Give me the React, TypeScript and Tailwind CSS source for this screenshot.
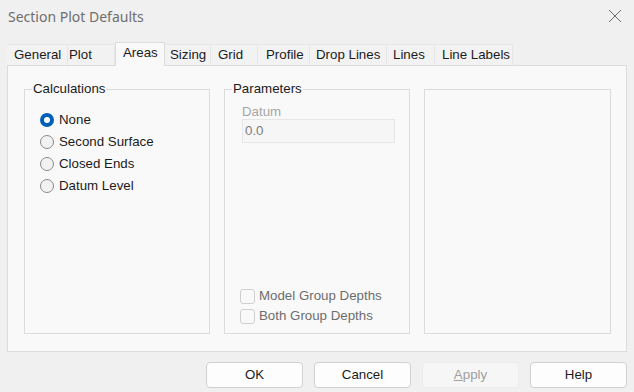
const tabs = [
  { label: "General", w: "w-[61px]", pl: "pl-[7px]" },
  { label: "Plot", w: "w-[47px]", pl: "pl-[1px]" },
  { label: "Areas", w: "w-[50px]", pl: "pl-[7px]", active: true },
  { label: "Sizing", w: "w-[46px]", pl: "pl-[5px]" },
  { label: "Grid", w: "w-[47px]", pl: "pl-[7px]" },
  { label: "Profile", w: "w-[52px]", pl: "pl-[8px]" },
  { label: "Drop Lines", w: "w-[77px]", pl: "pl-[6px]" },
  { label: "Lines", w: "w-[48px]", pl: "pl-[6px]" },
  { label: "Line Labels", w: "w-[78px]", pl: "pl-[7px]" },
];

const calcOptions = ["None", "Second Surface", "Closed Ends", "Datum Level"];

function Radio({ checked }: { checked?: boolean }) {
  if (checked) {
    return (
      <span className="flex h-[14px] w-[14px] items-center justify-center rounded-full bg-[#005fb8]">
        <span className="h-[6px] w-[6px] rounded-full bg-white" />
      </span>
    );
  }
  return <span className="h-[14px] w-[14px] rounded-full border border-[#8a8a8a] bg-[#f2f2f2]" />;
}

function Checkbox({ label }: { label: string }) {
  return (
    <div className="flex h-[20px] items-center gap-[4px]">
      <span className="h-[15px] w-[15px] rounded-[3px] border border-[#cfcfcf] bg-[#f9f9f9]" />
      <span className="text-[#6d6d6d]">{label}</span>
    </div>
  );
}

function Group({ title, children }: { title: string; children?: React.ReactNode }) {
  return (
    <fieldset className="h-[253px] border border-[#dcdcdc]">
      <legend className="ml-[7px] px-[1px] leading-[16px] text-[#1b1b1b]">{title}</legend>
      <div className="flex h-[236px] flex-col">{children}</div>
    </fieldset>
  );
}

function Button({ label, disabled }: { label: React.ReactNode; disabled?: boolean }) {
  return (
    <button
      className={
        disabled
          ? "h-[26px] w-[97px] rounded-[4px] border border-[#ececec] bg-[#f6f6f6] text-[#a0a0a0]"
          : "h-[26px] w-[97px] rounded-[4px] border border-[#d0d0d0] bg-[#fdfdfd] text-[#1b1b1b]"
      }
    >
      {label}
    </button>
  );
}

export default function App() {
  return (
    <div className="flex h-[392px] w-[634px] flex-col bg-[#f0f0f0] text-[13.3px] font-['Liberation_Sans',Arial,sans-serif] text-[#1b1b1b]">
      <div className="flex h-[33px] items-center justify-between pl-[8px] pr-[12px]">
        <span className="font-['Noto_Sans',sans-serif] text-[14px] text-[#6e6e6e]">Section Plot Defaults</span>
        <svg width="14" height="14" viewBox="0 0 14 14" className="mt-[-2px]">
          <path d="M1 1L13 13M13 1L1 13" stroke="#6a6a6a" strokeWidth="1" />
        </svg>
      </div>

      <div className="mt-[9px] flex h-[23px] items-end pl-[7px]">
        {tabs.map((t) =>
          t.active ? (
            <div
              key={t.label}
              className={`relative z-10 -mb-[1px] flex h-[24px] items-center border-x border-t border-[#dcdcdc] bg-[#f9f9f9] pb-[3px] ${t.w} ${t.pl}`}
            >
              {t.label}
            </div>
          ) : (
            <div
              key={t.label}
              className={`flex h-[21px] items-center border-r border-t border-[#e6e6e6] bg-[#f2f2f2] ${t.w} ${t.pl}`}
            >
              {t.label}
            </div>
          )
        )}
      </div>

      <div className="mx-[7px] grid h-[287px] grid-cols-[186px_186px_187px] gap-[14px] border border-[#dcdcdc] bg-[#f9f9f9] px-[16px] pt-[15px]">
        <Group title="Calculations">
          <div className="flex flex-col pl-[15px] pt-[12px]">
            {calcOptions.map((o, i) => (
              <div key={o} className="flex h-[22px] items-center gap-[5px]">
                <Radio checked={i === 0} />
                <span>{o}</span>
              </div>
            ))}
          </div>
        </Group>
        <Group title="Parameters">
          <div className="flex h-full flex-col pl-[17px] pr-[14px] pt-[7px]">
            <span className="h-[15px] leading-[15px] text-[#a6a6a6]">Datum</span>
            <div className="flex h-[24px] items-center border border-[#e6e6e6] bg-[#f6f6f6] pl-[2px] text-[#7d7d7d]">0.0</div>
            <div className="mt-auto flex flex-col pb-[7px] -ml-[2px]">
              <Checkbox label="Model Group Depths" />
              <Checkbox label="Both Group Depths" />
            </div>
          </div>
        </Group>
        <fieldset className="mt-[8px] h-[245px] border border-[#dcdcdc]" />
      </div>

      <div className="mt-[10px] flex justify-end gap-[11px] pr-[7px]">
        <Button label="OK" />
        <Button label="Cancel" />
        <Button
          disabled
          label={
            <>
              <span className="underline">A</span>pply
            </>
          }
        />
        <Button label="Help" />
      </div>
    </div>
  );
}
